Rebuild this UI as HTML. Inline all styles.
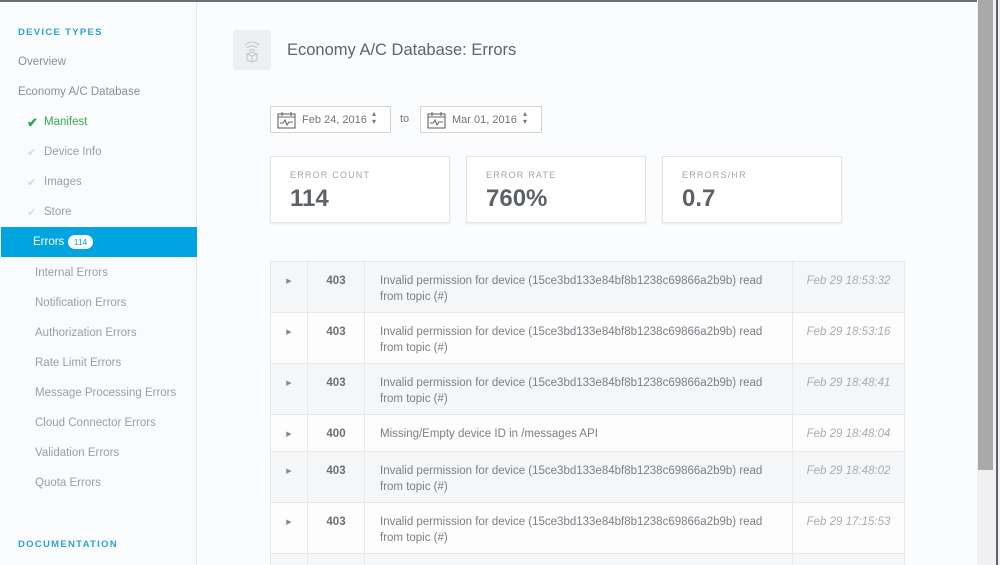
<!DOCTYPE html>
<html><head><meta charset="utf-8"><style>
*{margin:0;padding:0;box-sizing:border-box}
html,body{width:1000px;height:565px;overflow:hidden}
body{background:#fbfcfd;font-family:"Liberation Sans",sans-serif;position:relative;color:#7a7f85}
.a{position:absolute;white-space:nowrap}
#top{left:0;top:0;width:977px;height:2px;background:#6b6e72}
#side{left:0;top:2px;width:197px;height:563px;background:#fafbfc;border-right:1px solid #e6e8ea}
.h{font-size:9.5px;font-weight:bold;letter-spacing:1.3px;color:#2aa3d6}
.n{font-size:11.5px;color:#8a8f95}
.s{font-size:11.5px;color:#9a9ea3}
#sel{left:1px;top:227px;width:196px;height:30px;background:#00a5e0}
.card{position:absolute;top:156px;width:180px;height:67px;background:#fff;border:1px solid #e3e5e8;box-shadow:0 1px 2px rgba(0,0,0,.08)}
.card .l{position:absolute;left:19px;top:13px;font-size:9px;letter-spacing:1.2px;color:#a0a4a9}
.card .v{position:absolute;left:19px;top:28px;font-size:24px;font-weight:bold;color:#5d6268}
.date{position:absolute;top:106px;height:27px;background:#fff;border:1px solid #d0d3d6;font-size:11px;color:#6f747a}
#tw{position:absolute;left:270px;top:261px;width:635px;height:304px;overflow:hidden}
table{width:635px;border-collapse:collapse;font-size:11.5px}
td{border:1px solid #e6e8ea;color:#7a7f85;vertical-align:top}
tr:nth-child(odd) td{background:#f5f6f7}
tr:nth-child(even) td{background:#fdfdfe}
td.c1{width:37px;text-align:center;font-size:7px;color:#888;padding-top:15px}
td.c2{width:57px;text-align:center;font-weight:bold;color:#6a6f75;padding-top:13px}
td.c3{width:428px;padding:12px 24px 0 15px;line-height:15.5px;white-space:normal}
td.c4{font-style:italic;color:#a8acb0;text-align:center;padding-top:13px}
</style></head><body>
<div class="a" id="top"></div>
<div class="a" id="side"></div>
<div class="a h" style="left:18px;top:27px">DEVICE TYPES</div>
<div class="a n" style="left:18px;top:56px">Overview</div>
<div class="a n" style="left:18px;top:86px">Economy A/C Database</div>
<div class="a" style="left:27px;top:115px;font-size:13px;color:#2eaa4a;font-weight:bold">✔</div>
<div class="a n" style="left:44px;top:116px;color:#3aa852">Manifest</div>
<div class="a" style="left:27px;top:146px;font-size:11px;color:#d8dadc">✔</div>
<div class="a s" style="left:44px;top:146px">Device Info</div>
<div class="a" style="left:27px;top:176px;font-size:11px;color:#d8dadc">✔</div>
<div class="a s" style="left:44px;top:176px">Images</div>
<div class="a" style="left:27px;top:206px;font-size:11px;color:#d8dadc">✔</div>
<div class="a s" style="left:44px;top:206px">Store</div>
<div class="a" id="sel"></div>
<div class="a" style="left:33px;top:236px;font-size:11.5px;color:#fff">Errors</div>
<div class="a" style="left:68px;top:235px;width:25px;height:14px;border-radius:7px;background:#fff;color:#00a5e0;font-size:8.5px;text-align:center;line-height:14px">114</div>
<div class="a s" style="left:35px;top:267px">Internal Errors</div>
<div class="a s" style="left:35px;top:297px">Notification Errors</div>
<div class="a s" style="left:35px;top:327px">Authorization Errors</div>
<div class="a s" style="left:35px;top:357px">Rate Limit Errors</div>
<div class="a s" style="left:35px;top:387px">Message Processing Errors</div>
<div class="a s" style="left:35px;top:417px">Cloud Connector Errors</div>
<div class="a s" style="left:35px;top:447px">Validation Errors</div>
<div class="a s" style="left:35px;top:477px">Quota Errors</div>
<div class="a h" style="left:18px;top:539px">DOCUMENTATION</div>

<div class="a" style="left:233px;top:30px;width:38px;height:40px;background:#eeeff1;border-radius:3px">
<svg width="38" height="40" viewBox="0 0 38 40"><g fill="none" stroke="#bfc2c6" stroke-width="1"><path d="M12 15a10 10 0 0 1 14 0"/><path d="M14 18a7 7 0 0 1 10 0"/><path d="M16 21a4 4 0 0 1 6 0"/><path d="M14 24l5-2 5 2v6l-5 2-5-2z"/><path d="M14 24l5 2 5-2M19 26v6"/></g></svg></div>
<div class="a" style="left:287px;top:41px;font-size:16.5px;color:#5f646a">Economy A/C Database: Errors</div>

<div class="date" style="left:270px;width:121px">
<svg class="a" style="left:6px;top:4px" width="19" height="18" viewBox="0 0 19 18"><g fill="none" stroke="#666" stroke-width="1.1"><rect x="1" y="3" width="17" height="14"/><path d="M1 6h17M5 1v4M14 1v4M3 12h3l2-3 2 5 2-3h4"/></g></svg>
<span class="a" style="left:31px;top:7px">Feb 24, 2016</span><span class="a" style="left:101px;top:3px;font-size:8px;line-height:8px;color:#777">▴<br>▾</span></div>
<div class="a" style="left:400px;top:113px;font-size:11px;color:#777">to</div>
<div class="date" style="left:420px;width:122px">
<svg class="a" style="left:6px;top:4px" width="19" height="18" viewBox="0 0 19 18"><g fill="none" stroke="#666" stroke-width="1.1"><rect x="1" y="3" width="17" height="14"/><path d="M1 6h17M5 1v4M14 1v4M3 12h3l2-3 2 5 2-3h4"/></g></svg>
<span class="a" style="left:31px;top:7px">Mar 01, 2016</span><span class="a" style="left:102px;top:3px;font-size:8px;line-height:8px;color:#777">▴<br>▾</span></div>

<div class="card" style="left:270px"><div class="l">ERROR COUNT</div><div class="v">114</div></div>
<div class="card" style="left:466px"><div class="l">ERROR RATE</div><div class="v">760%</div></div>
<div class="card" style="left:662px"><div class="l">ERRORS/HR</div><div class="v">0.7</div></div>

<div id="tw"><table>
<tr style="height:51px"><td class="c1">▶</td><td class="c2">403</td><td class="c3">Invalid permission for device (15ce3bd133e84bf8b1238c69866a2b9b) read from topic (#)</td><td class="c4">Feb 29 18:53:32</td></tr>
<tr style="height:51px"><td class="c1">▶</td><td class="c2">403</td><td class="c3">Invalid permission for device (15ce3bd133e84bf8b1238c69866a2b9b) read from topic (#)</td><td class="c4">Feb 29 18:53:16</td></tr>
<tr style="height:51px"><td class="c1">▶</td><td class="c2">403</td><td class="c3">Invalid permission for device (15ce3bd133e84bf8b1238c69866a2b9b) read from topic (#)</td><td class="c4">Feb 29 18:48:41</td></tr>
<tr style="height:37px"><td class="c1">▶</td><td class="c2">400</td><td class="c3">Missing/Empty device ID in /messages API</td><td class="c4">Feb 29 18:48:04</td></tr>
<tr style="height:51px"><td class="c1">▶</td><td class="c2">403</td><td class="c3">Invalid permission for device (15ce3bd133e84bf8b1238c69866a2b9b) read from topic (#)</td><td class="c4">Feb 29 18:48:02</td></tr>
<tr style="height:51px"><td class="c1">▶</td><td class="c2">403</td><td class="c3">Invalid permission for device (15ce3bd133e84bf8b1238c69866a2b9b) read from topic (#)</td><td class="c4">Feb 29 17:15:53</td></tr>
<tr style="height:30px"><td class="c1"></td><td class="c2"></td><td class="c3"></td><td class="c4"></td></tr>
</table></div>

<div class="a" style="left:977px;top:0;width:23px;height:565px;background:#f0f0f0"></div>
<div class="a" style="left:978px;top:0;width:15px;height:470px;background:#a8a8a8"></div>
<div class="a" style="left:996px;top:0;width:2px;height:565px;background:#5a6170"></div>
</body></html>
